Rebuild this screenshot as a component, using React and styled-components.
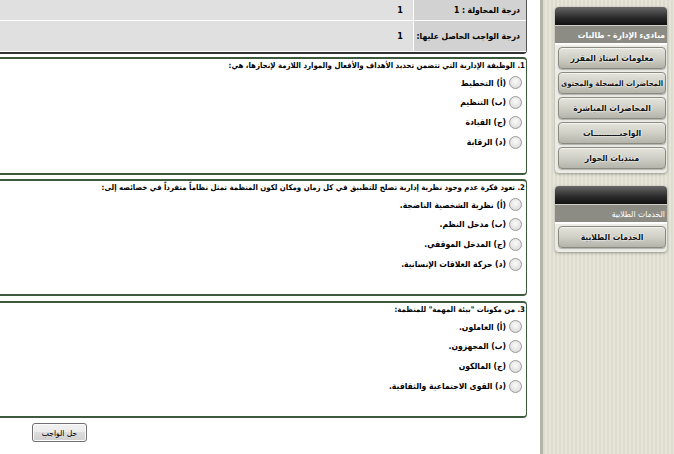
import React from "react";
import styled, { createGlobalStyle } from "styled-components";

const GlobalStyle = createGlobalStyle`
  html, body {
    margin: 0;
    padding: 0;
    background: #fff;
  }
  body {
    font-family: "DejaVu Sans Condensed", "DejaVu Sans", sans-serif;
    font-size: 9px;
  }
`;

const Page = styled.div`
  display: flex;
  width: 674px;
  height: 454px;
  overflow: hidden;
`;

const Content = styled.div`
  width: 540px;
  flex: none;
  overflow: hidden;
  direction: rtl;
  padding-right: 13px;
  box-sizing: border-box;
`;

const ScoreTable = styled.div`
  margin-left: -8px;
  border-bottom: 2px solid #333;
  border-right: 1px solid #555;
  border-bottom-right-radius: 4px;
  background: #fff;
`;

const ScoreRow = styled.div`
  display: flex;
  height: ${p => p.h}px;
  border-bottom: 1px solid #fff;
`;

const ScoreLabel = styled.div`
  width: 113px;
  flex: none;
  background: #d2d2d2;
  font-weight: bold;
  font-size: 8.5px;
  white-space: nowrap;
  display: flex;
  align-items: center;
  padding-right: 6px;
  box-sizing: border-box;
  border-left: 1px solid #fff;
`;

const ScoreValue = styled.div`
  flex: 1;
  background: #e0e0e0;
  font-weight: bold;
  font-size: 9px;
  display: flex;
  align-items: center;
  padding-right: 10px;
`;

const QuestionBox = styled.div`
  margin-left: -8px;
  margin-top: ${p => p.mt}px;
  height: ${p => p.h}px;
  box-sizing: border-box;
  border: 2px solid #3d5a3d;
  border-right-width: 1px;
  border-top-right-radius: 4px;
  border-bottom-right-radius: 4px;
`;

const QuestionText = styled.div`
  font-weight: bold;
  font-size: 7.8px;
  line-height: 14px;
  padding-right: 1px;
  white-space: nowrap;
`;

const Option = styled.label`
  display: flex;
  align-items: center;
  height: ${p => p.h || 20}px;
  padding-right: 4px;
  font-weight: bold;
  font-size: 8.5px;
  white-space: nowrap;
`;

const Radio = styled.span`
  width: 11px;
  height: 11px;
  border-radius: 50%;
  border: 1px solid #9a9a9a;
  background: radial-gradient(circle at 50% 40%, #fbfbfb 0%, #e6e6e6 55%, #d0d0d0 100%);
  margin-left: 3px;
  flex: none;
`;

const Actions = styled.div`
  direction: ltr;
  padding: 5px 0 0 32px;
`;

const SubmitButton = styled.button`
  height: 19px;
  width: 55px;
  padding: 0;
  font-family: inherit;
  font-size: 8.5px;
  border: 1px solid #707070;
  border-radius: 3px;
  background: linear-gradient(#f2f2f2, #ebebeb 50%, #dddddd 50%, #cfcfcf);
  box-shadow: inset 0 0 0 1px #fcfcfc;
  color: #000;
`;

const Sidebar = styled.div`
  flex: 1;
  direction: rtl;
  padding: 7px 7px 0 12px;
  display: flex;
  flex-direction: column;
  gap: 13px;
  background: repeating-linear-gradient(
    90deg,
    #dcdbcd 0px,
    #dcdbcd 2px,
    #e6e5da 2px,
    #e6e5da 4px
  );
  border-left: 3px solid #b4b4a8;
`;

const Panel = styled.div`
  width: 112px;
  border-radius: 4px;
  overflow: hidden;
  background: #ecece6;
  box-shadow: 0 1px 3px rgba(0, 0, 0, 0.35);
  padding-bottom: 4px;
`;

const PanelHead = styled.div`
  height: 18px;
  background: linear-gradient(#666, #2a2a2a 60%, #111);
  border-bottom: 1px solid #d0d0c8;
`;

const PanelTitle = styled.div`
  height: 17px;
  background: #8c8c84;
  color: #fff;
  font-size: 8.5px;
  font-weight: ${p => (p.light ? "normal" : "bold")};
  white-space: nowrap;
  display: flex;
  align-items: center;
  padding-right: 2px;
  border-bottom: 2px solid #fff;
`;

const MenuList = styled.div`
  display: flex;
  flex-direction: column;
  gap: 3px;
  padding: 2px 1px 0 3px;
`;

const MenuButton = styled.div`
  height: 20px;
  border: 1px solid #8a8a80;
  border-radius: 4px;
  background: linear-gradient(#e4e4dc, #cfcfc6 50%, #b4b4aa);
  box-shadow: inset 0 1px 0 #f4f4ee, 0 1px 1px rgba(0, 0, 0, 0.25);
  display: flex;
  align-items: center;
  justify-content: center;
  font-size: ${p => (p.tight ? 7.6 : 8.5)}px;
  font-weight: bold;
  color: #111;
  text-shadow: 0 0 2px #fff, 0 0 2px #fff;
  white-space: nowrap;
  overflow: hidden;
`;

const questions = [
  {
    text: "1. الوظيفة الإدارية التي تتضمن تحديد الأهداف والأفعال والموارد اللازمة لإنجازها، هي:",
    options: ["(أ) التخطيط", "(ب) التنظيم", "(ج) القيادة", "(د) الرقابة"],
    mt: 3,
    h: 118,
  },
  {
    text: "2. تعود فكرة عدم وجود نظرية إدارية تصلح للتطبيق في كل زمان ومكان لكون المنظمة تمثل نظاماً متفرداً في خصائصه إلى:",
    options: [
      "(أ) نظرية الشخصية الناضجة.",
      "(ب) مدخل النظم.",
      "(ج) المدخل الموقفي.",
      "(د) حركة العلاقات الإنسانية.",
    ],
    mt: 4,
    h: 117,
  },
  {
    text: "3. من مكونات \"بيئة المهمة\" للمنظمة:",
    options: [
      "(أ) العاملون.",
      "(ب) المجهزون.",
      "(ج) المالكون",
      "(د) القوى الاجتماعية والثقافية.",
    ],
    mt: 5,
    h: 117,
  },
];

const menu = [
  "معلومات استاذ المقرر",
  "المحاضرات المسجلة والمحتوى",
  "المحاضرات المباشرة",
  "الواجبــــــــــات",
  "منتديات الحوار",
];

export default function App() {
  return (
    <Page>
      <GlobalStyle />
      <Content>
        <ScoreTable>
          <ScoreRow h={20}>
            <ScoreLabel>درجة المحاولة : 1</ScoreLabel>
            <ScoreValue>1</ScoreValue>
          </ScoreRow>
          <ScoreRow h={30}>
            <ScoreLabel>درجة الواجب الحاصل عليها:</ScoreLabel>
            <ScoreValue>1</ScoreValue>
          </ScoreRow>
        </ScoreTable>
        {questions.map((q, i) => (
          <QuestionBox key={i} mt={q.mt} h={q.h}>
            <QuestionText>{q.text}</QuestionText>
            {q.options.map((o, j) => (
              <Option key={j} h={j === 0 ? 19 : 20}>
                <Radio />
                {o}
              </Option>
            ))}
          </QuestionBox>
        ))}
        <Actions>
          <SubmitButton>حل الواجب</SubmitButton>
        </Actions>
      </Content>
      <Sidebar>
        <Panel>
          <PanelHead />
          <PanelTitle>مبادىء الإدارة - طالبات</PanelTitle>
          <MenuList>
            {menu.map((m, i) => (
              <MenuButton key={i} tight={m.length > 22}>
                {m}
              </MenuButton>
            ))}
          </MenuList>
        </Panel>
        <Panel>
          <PanelHead />
          <PanelTitle light>الخدمات الطلابية</PanelTitle>
          <MenuList>
            <MenuButton>الخدمات الطلابية</MenuButton>
          </MenuList>
        </Panel>
      </Sidebar>
    </Page>
  );
}
